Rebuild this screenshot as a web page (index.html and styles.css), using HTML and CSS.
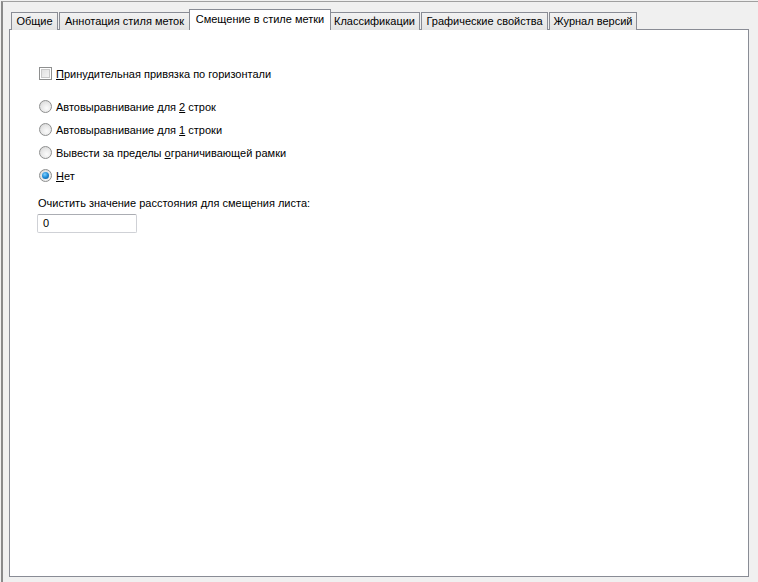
FILE: index.html
```html
<!DOCTYPE html>
<html lang="ru">
<head>
<meta charset="utf-8">
<title>Смещение в стиле метки</title>
<link rel="stylesheet" href="styles.css">
</head>
<body>
<div class="window">
  <div class="tabstrip">
    <div class="tab tab-general">Общие</div>
    <div class="tab tab-annotation">Аннотация стиля меток</div>
    <div class="tab active tab-offset">Смещение в стиле метки</div>
    <div class="tab tab-class">Классификации</div>
    <div class="tab tab-graphic">Графические свойства</div>
    <div class="tab tab-history">Журнал версий</div>
  </div>
  <div class="panel">
    <label class="row check-row"><span class="checkbox"></span><span><u>П</u>ринудительная привязка по горизонтали</span></label>
    <div class="radios">
      <label class="row"><span class="radio"></span><span>Автовыравнивание для <u>2</u> строк</span></label>
      <label class="row"><span class="radio"></span><span>Автовыравнивание для <u>1</u> строки</span></label>
      <label class="row"><span class="radio"></span><span>Вывести за пределы <u>о</u>граничивающей рамки</span></label>
      <label class="row"><span class="radio checked"></span><span><u>Н</u>ет</span></label>
    </div>
    <div class="field-label">Очистить значение расстояния для смещения листа:</div>
    <div class="textbox">0</div>
  </div>
</div>
</body>
</html>
```

FILE: styles.css
```css
html, body {
  margin: 0;
  padding: 0;
  background: #f0f0f0;
  font-family: "Liberation Sans", Arial, sans-serif;
  font-size: 11px;
  color: #000;
  overflow: hidden;
}

.window {
  box-sizing: border-box;
  height: 581px;
  width: 757px;
  border-top: 1px solid #a0a0a0;
  border-left: 2px solid #8a8a8a;
  margin-top: 1px;
  margin-left: 1px;
  padding: 8px 9px 5px 6px;
  display: flex;
  flex-direction: column;
}

.tabstrip {
  display: flex;
  align-items: flex-end;
  height: 20px;
  padding-left: 2px;
  position: relative;
  z-index: 1;
  margin-bottom: -1px;
}

.tab {
  box-sizing: border-box;
  height: 18px;
  border: 1px solid #898c95;
  border-bottom: none;
  background: linear-gradient(#f2f2f2, #e3e3e3);
  line-height: 17px;
  white-space: nowrap;
  text-align: center;
  margin-right: 1px;
  flex: none;
}

.tab.active {
  height: 21px;
  background: #fff;
  margin-left: -2px;
  margin-right: -2px;
  line-height: 18px;
  position: relative;
  z-index: 1;
}

.tab-general { width: 47px; }
.tab-annotation { width: 131px; }
.tab-offset { width: 142px; }
.tab-class { width: 91px; }
.tab-graphic { width: 127px; }
.tab-history { width: 88px; }

.panel {
  flex: 1;
  background: #fff;
  border: 1px solid #898c95;
  padding: 37px 28px;
}

.row {
  display: flex;
  align-items: center;
  height: 13px;
  gap: 4px;
}

.check-row {
  margin-bottom: 20px;
}

.radios {
  display: flex;
  flex-direction: column;
  gap: 10px;
}

.checkbox {
  box-sizing: border-box;
  width: 13px;
  height: 13px;
  margin-left: 1px;
  border: 1px solid #8e8f8f;
  box-shadow: inset 0 0 0 1px #fff, inset 0 0 0 2px #c8c8c8;
  background-image: linear-gradient(135deg, #dcdcdc, #f8f8f8);
}

.radio {
  box-sizing: border-box;
  width: 13px;
  height: 13px;
  margin-left: 1px;
  border-radius: 50%;
  border: 1px solid #8e8f8f;
  background: radial-gradient(circle at 60% 65%, #fbfbfb 0%, #e6e6e6 55%, #cfcfcf 100%);
  position: relative;
}

.radio.checked::after {
  content: "";
  position: absolute;
  left: 2px;
  top: 2px;
  width: 7px;
  height: 7px;
  border-radius: 50%;
  background: radial-gradient(circle at 40% 35%, #7fd0ff 0%, #1e8ad6 50%, #0b4f8a 100%);
}

.field-label {
  margin-top: 15px;
  height: 13px;
  line-height: 13px;
}

.textbox {
  box-sizing: border-box;
  margin-top: 4px;
  margin-left: -1px;
  width: 100px;
  height: 19px;
  border: 1px solid #cfd1d6;
  border-top-color: #abadb3;
  border-radius: 2px;
  padding: 0 5px;
  line-height: 17px;
}
```
